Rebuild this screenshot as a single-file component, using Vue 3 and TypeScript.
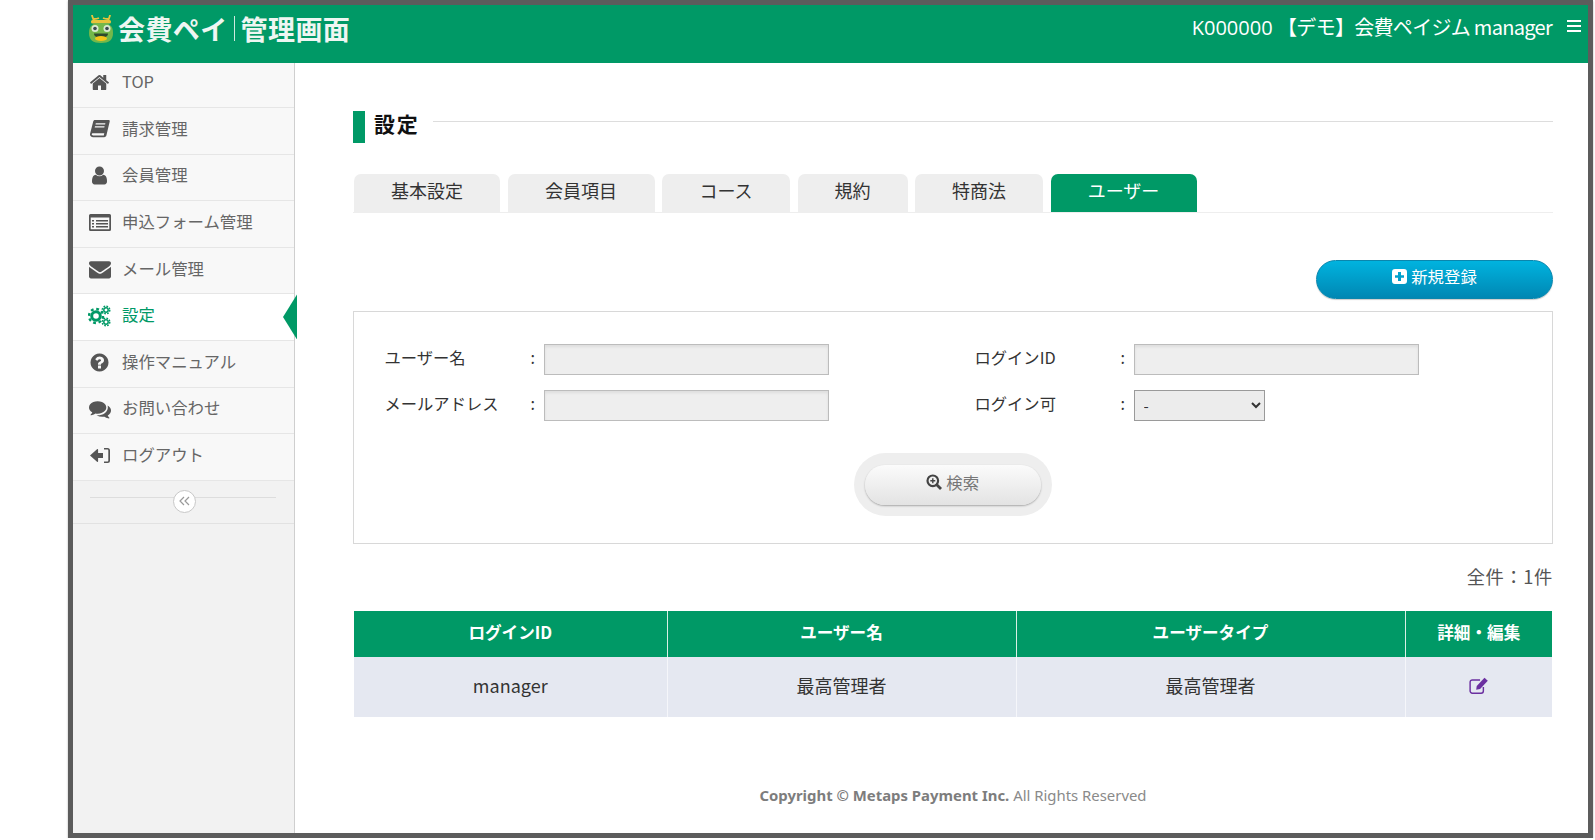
<script setup lang="ts">
const tabs = [
  { label: '基本設定', w: 146 },
  { label: '会員項目', w: 147 },
  { label: 'コース', w: 128 },
  { label: '規約', w: 110 },
  { label: '特商法', w: 128 },
  { label: 'ユーザー', w: 146, active: true },
]
const navBefore = ['TOP', '請求管理', '会員管理', '申込フォーム管理', 'メール管理']
const navAfter = ['操作マニュアル', 'お問い合わせ', 'ログアウト']
</script>

<template>
  <div class="frame">
    <header class="top">
      <div class="brand">
        <svg class="frog" width="27" height="31" viewBox="0 0 27 31">
          <path d="M6 9 C6 6 4 4 4 2 M20 9 C20 6 22 4 22 2 M6 6 C8 6 9 6 11 5 M20 6 C18 6 17 6 15 5" fill="none" stroke="#e8c33a" stroke-width="1.800" />
          <rect x="3" y="7" width="20" height="3.500" rx="1.500" fill="#e8c33a" />
          <path d="M1 20 C1 13 4 10 13 10 C22 10 25 13 25 20 C25 27 21 30 13 30 C5 30 1 27 1 20z" fill="#74b84a" />
          <rect x="3.500" y="12" width="7" height="7" rx="3.500" fill="#dcebd3" />
          <rect x="15.500" y="12" width="7" height="7" rx="3.500" fill="#dcebd3" />
          <circle cx="7" cy="15.500" r="1.800" fill="#3c4a52" />
          <circle cx="19" cy="15.500" r="1.800" fill="#3c4a52" />
          <path d="M6 20.500 H20 C20 23 18 24.500 13 24.500 C8 24.500 6 23 6 20.500z" fill="#2f4a2c" />
          <ellipse cx="13" cy="25.500" rx="6" ry="2.600" fill="#f5c518" />
        </svg>
        <span class="brand-a">会費ペイ</span>
        <span class="brand-sep"></span>
        <span class="brand-b">管理画面</span>
      </div>
      <div class="account"><span class="code">K000000</span> <span class="acc-rest">【デモ】会費ペイジム manager</span></div>
      <div class="burger"><i></i><i></i><i></i></div>
    </header>
    <div class="body">
      <aside class="side">
        <nav>
          <a v-for="(n, i) in navBefore" :key="n" class="item">
            <span class="ico">
              <svg v-if="i === 0" width="21" height="21" viewBox="0 0 1792 1792"><path d="M1472 992v480q0 26-19 45t-45 19h-384v-384h-256v384h-384q-26 0-45-19t-19-45v-480q0-1 .5-3t.5-3l575-474 575 474q1 2 1 6zm223-69l-62 74q-8 9-21 11h-3q-13 0-21-7l-692-577-692 577q-12 8-24 7-13-2-21-11l-62-74q-8-10-7-23.5t11-21.5l719-599q32-26 76-26t76 26l244 204v-195q0-14 9-23t23-9h192q14 0 23 9t9 23v408l219 182q10 8 11 21.5t-7 23.5z" /></svg>
              <svg v-else-if="i === 1" width="20" height="18" viewBox="0 0 20 18"><path fill-rule="evenodd" d="M5 0h13.500c1 0 1.500.6 1.200 1.500L16.500 15c-.3 1.300-1 2.200-2.400 2.200H3.200C1.200 17.200 0 16 0 14.600c0-.5.1-.9.2-1.300L3.200 1.600C3.400.6 4 0 5 0zm.8 3.200-.3 1.200h9.600l.3-1.200H5.800zm-.8 3-.3 1.200h9.600l.3-1.200H5zM3.100 13.200c-.9 0-1.400.4-1.400 1.100s.6 1.100 1.500 1.100h10.600c.1-.7.3-1.500.5-2.200H3.100z" /></svg>
              <svg v-else-if="i === 2" width="21" height="21" viewBox="0 0 1792 1792"><path d="M1536 1399q0 109-62.5 187t-150.5 78h-854q-88 0-150.5-78t-62.5-187q0-85 8.5-160.5t31.5-152 58.5-131 94-89 134.5-34.5q131 128 313 128t313-128q76 0 134.5 34.5t94 89 58.5 131 31.500 152 8.500 160.500zm-256-887q0 159-112.500 271.500t-271.500 112.500-271.500-112.500-112.500-271.500 112.500-271.500 271.500-112.500 271.500 112.500 112.500 271.500z" /></svg>
              <svg v-else-if="i === 3" width="22" height="17" viewBox="0 0 22 17"><path fill-rule="evenodd" d="M1.500 0h19A1.500 1.500 0 0 1 22 1.500v14a1.500 1.500 0 0 1-1.500 1.500h-19A1.500 1.500 0 0 1 0 15.500v-14A1.500 1.500 0 0 1 1.500 0zM1.700 3.500v11.800h18.600V3.500H1.700zM3 6h2v1.500H3zm4 0h12v1.500H7zM3 9h2v1.500H3zm4 0h12v1.500H7zm-4 3h2v1.500H3zm4 0h12v1.500H7z" /></svg>
              <svg v-else width="22" height="22" viewBox="0 0 1792 1792"><path d="M1792 710v794q0 66-47 113t-113 47h-1472q-66 0-113-47t-47-113v-794q44 49 101 87 362 246 497 345 57 42 92.500 65.500t94.500 48 110 24.500h2q51 0 110-24.500t94.500-48 92.500-65.500q170-123 498-345 57-39 100-87zm0-294q0 79-49 151t-122 123q-376 261-468 325-10 7-42.500 30.500t-54 38-52 32.500-57.500 27-50 9h-2q-23 0-50-9t-57.500-27-52-32.500-54-38-42.500-30.500q-91-64-262-182.500t-205-142.500q-62-42-117-115.500t-55-136.500q0-78 41.500-130t118.500-52h1472q65 0 112.500 47t47.500 113z" /></svg>
            </span>
            <span>{{ n }}</span>
          </a>
          <a class="item current">
            <span class="ico">
              <svg width="23" height="22" viewBox="0 0 23 22">
                <circle cx="8" cy="11" r="4.300" fill="none" stroke="#009966" stroke-width="3" />
                <circle cx="8" cy="11" r="7" fill="none" stroke="#009966" stroke-width="2.400" stroke-dasharray="2.800 2.700" />
                <circle cx="18" cy="5" r="2.200" fill="none" stroke="#009966" stroke-width="1.500" />
                <circle cx="18" cy="5" r="3.800" fill="none" stroke="#009966" stroke-width="1.400" stroke-dasharray="1.700 1.280" />
                <circle cx="18" cy="17" r="2.200" fill="none" stroke="#009966" stroke-width="1.500" />
                <circle cx="18" cy="17" r="3.800" fill="none" stroke="#009966" stroke-width="1.400" stroke-dasharray="1.700 1.280" />
              </svg>
            </span>
            <span>設定</span>
            <span class="pointer"></span>
          </a>
          <a v-for="(n, i) in navAfter" :key="n" class="item">
            <span class="ico">
              <svg v-if="i === 0" width="21" height="21" viewBox="0 0 1792 1792"><path d="M1024 1376v-192q0-14-9-23t-23-9h-192q-14 0-23 9t-9 23v192q0 14 9 23t23 9h192q14 0 23-9t9-23zm256-672q0-88-55.500-163t-138.500-116-170-41q-243 0-371 213-15 24 8 42l132 100q7 6 19 6 16 0 25-12 53-68 86-92 34-24 86-24 48 0 85.500 26t37.500 59q0 38-20 61t-68 45q-63 28-115.500 86.500t-52.500 125.500v36q0 14 9 23t23 9h192q14 0 23-9t9-23q0-19 21.500-49.500t54.500-49.500q32-18 49-28.500t46-35 44.500-48 28-60.500 12.500-81zm384 192q0 209-103 385.500t-279.500 279.500-385.500 103-385.500-103-279.500-279.500-103-385.500 103-385.500 279.500-279.500 385.500-103 385.500 103 279.500 279.500 103 385.500z" /></svg>
              <svg v-else-if="i === 1" width="22" height="22" viewBox="0 0 1792 1792"><path d="M1408 768q0 139-94 257t-256.500 186.500-353.500 68.500q-86 0-176-16-124 88-278 128-36 9-86 16h-3q-11 0-20.500-8t-11.500-21q-1-3-1-6.500t.5-6.500 2-6l2.500-5 3.500-5.500 4-5 4.500-5 4-4.500q5-6 23-25t26-29.500 22.500-29 25-38.500 20.500-44q-124-72-195-177t-71-224q0-139 94-257t256.500-186.500 353.500-68.500 353.500 68.500 256.500 186.500 94 257zm384 256q0 120-71 224.500t-195 176.500q10 24 20.500 44t25 38.500 22.500 29 26 29.500 23 25q1 1 4 4.500t4.500 5 4 5 3.500 5.500l2.500 5 2 6 .5 6.500-1 6.500q-3 14-13 22t-22 7q-50-7-86-16-154-40-278-128-90 16-176 16-271 0-472-132 58 4 88 4 161 0 309-45t264-129q125-92 192-212t67-254q0-77-23-152 129 71 204 178t75 230z" /></svg>
              <svg v-else width="20" height="17" viewBox="0 0 20 17"><path d="M0 8.500 7 2.200c.5-.4 1.100-.1 1.100.5V6H13v5H8.100v3.300c0 .6-.6.900-1.100.5L0 8.500zM14 1h3.500A2.500 2.500 0 0 1 20 3.500v10a2.500 2.500 0 0 1-2.500 2.500H14v-1.600h3.300c.6 0 1-.4 1-1V3.600c0-.6-.4-1-1-1H14V1z" /></svg>
            </span>
            <span>{{ n }}</span>
          </a>
        </nav>
        <div class="collapse">
          <span class="collapse-line"></span>
          <span class="collapse-btn">
            <svg width="11" height="10" viewBox="0 0 11 10"><path d="M5 1 1 5l4 4M10 1 6 5l4 4" fill="none" stroke="#9a9a9a" stroke-width="1.200" /></svg>
          </span>
        </div>
      </aside>
      <main class="main">
        <div class="heading">
          <span class="heading-bar"></span>
          <h1>設定</h1>
          <span class="heading-line"></span>
        </div>
        <div class="tabs">
          <div v-for="t in tabs" :key="t.label" class="tab" :class="{ on: t.active }" :style="{ width: t.w + 'px' }">{{ t.label }}</div>
        </div>
        <div class="actions">
          <button class="new">
            <svg width="15" height="15" viewBox="0 0 15 15"><path fill="#fff" fill-rule="evenodd" d="M3 0h9a3 3 0 0 1 3 3v9a3 3 0 0 1-3 3H3a3 3 0 0 1-3-3V3a3 3 0 0 1 3-3zm3 3v3.200H3v2.600h3V12h3V8.800h3V6.200H9V3H6z" /></svg>
            新規登録
          </button>
        </div>
        <section class="panel">
          <div class="grid">
            <label>ユーザー名</label><span class="colon">:</span><input class="input" type="text" />
            <label class="second">ログインID</label><span class="colon">:</span><input class="input" type="text" />
            <label>メールアドレス</label><span class="colon">:</span><input class="input" type="text" />
            <label class="second">ログイン可</label><span class="colon">:</span>
            <select class="select"><option>-</option></select>
          </div>
          <div class="search-wrap">
            <div class="search-halo">
              <button class="search">
                <svg width="16" height="16" viewBox="0 0 16 16"><circle cx="6.800" cy="6.800" r="5.300" fill="none" stroke="#444" stroke-width="2.200" /><path d="M10.500 10.500 15 15" stroke="#444" stroke-width="2.800" /><path d="M4.300 6.800h5M6.800 4.300v5" stroke="#444" stroke-width="1.400" /></svg>
                検索
              </button>
            </div>
          </div>
        </section>
        <div class="count">全件：1件</div>
        <table>
          <colgroup>
            <col style="width: 313px" /><col style="width: 349px" /><col style="width: 389px" /><col />
          </colgroup>
          <thead>
            <tr><th>ログインID</th><th>ユーザー名</th><th>ユーザータイプ</th><th>詳細・編集</th></tr>
          </thead>
          <tbody>
            <tr>
              <td>manager</td><td>最高管理者</td><td>最高管理者</td>
              <td>
                <svg class="edit" width="21" height="18" viewBox="0 0 19 16"><path d="M13 9v3.500a2 2 0 0 1-2 2H3a2 2 0 0 1-2-2V4.500a2 2 0 0 1 2-2h7" fill="none" stroke="#6b2fa0" stroke-width="1.300" /><path d="M6.500 11.500 7 8l7-7.500 3 2.800-7 7.500z" fill="#6b2fa0" /></svg>
              </td>
            </tr>
          </tbody>
        </table>
        <footer><b>Copyright © Metaps Payment Inc.</b> All Rights Reserved</footer>
      </main>
    </div>
  </div>
</template>

<style scoped>
.frame {
  box-sizing: border-box;
  margin-left: 68px;
  width: 1525px;
  height: 838px;
  border: 5px solid #5c5c5c;
  background: #fff;
  display: flex;
  flex-direction: column;
  font-family: "Noto Sans CJK JP", "Noto Sans", sans-serif;
  overflow: hidden;
  box-shadow: 0 1px 2px rgba(0, 0, 0, 0.3);
}
.top {
  height: 58px;
  flex: none;
  background: #009966;
  color: #fff;
  display: flex;
  align-items: center;
  padding: 0 7px 10px 15px;
  box-sizing: border-box;
}
.brand { display: flex; align-items: center; flex: 1; margin-bottom: 2px; }
.frog { margin-right: 3px; }
.brand-a, .brand-b { font-size: 27px; font-weight: 700; color: #eef6f2; line-height: 1; letter-spacing: 0.4px; }
.brand-sep { width: 1px; height: 25px; background: #cfe9de; margin: 0 6px; }
.account { font-size: 20px; line-height: 1; margin-bottom: 4px; }
.code { font-family: "Open Sans", sans-serif; }
.acc-rest { letter-spacing: -0.7px; }
.burger { margin-left: 15px; display: flex; flex-direction: column; gap: 3px; margin-bottom: 6px; }
.burger i { display: block; width: 14px; height: 2px; background: #fff; }
.body { flex: 1; display: flex; min-height: 0; }
.side {
  width: 222px;
  flex: none;
  box-sizing: border-box;
  background: #f2f2f2;
  border-right: 1px solid #cfcfcf;
}
.item {
  height: 46.600px;
  box-sizing: border-box;
  display: flex;
  align-items: center;
  padding: 0 0 6px 14px;
  background: #f8f8f8;
  color: #666;
  font-size: 16.400px;
  border-bottom: 1.500px solid #e6e6e6;
  position: relative;
}
.item:first-child { height: 45px; padding-bottom: 8px; }
.ico { width: 35px; flex: none; display: flex; justify-content: center; transform: translateX(-5px); fill: #555; margin-top: 3px; }
.current { background: #fff; color: #009966; }
.pointer {
  position: absolute;
  right: -3px;
  top: 0;
  width: 14px;
  height: 45px;
  background: #009966;
  clip-path: polygon(100% 0, 100% 100%, 0 50%);
}
.collapse {
  position: relative;
  height: 43px;
  border-bottom: 1.500px solid #e2e2e2;
  box-sizing: border-box;
}
.collapse-line { position: absolute; left: 17px; right: 18px; top: 16px; height: 1px; background: #ddd; }
.collapse-btn {
  position: absolute;
  left: 100px;
  top: 9px;
  width: 23px;
  height: 23px;
  box-sizing: border-box;
  border: 1px solid #c8c8c8;
  border-radius: 50%;
  background: #fff;
  display: flex;
  align-items: center;
  justify-content: center;
}
.main { flex: 1; padding: 48px 35px 0 58px; min-width: 0; box-sizing: border-box; }
.heading { display: flex; align-items: flex-start; height: 32px; }
.heading-bar { width: 12px; height: 32px; background: #009966; flex: none; }
h1 { margin: 0 14px 0 9px; font-size: 21px; font-weight: 700; line-height: 25px; color: #111; letter-spacing: 1.700px; }
.heading-line { flex: 1; height: 1px; background: #ddd; margin-top: 10px; }
.tabs {
  display: flex;
  gap: 7.500px;
  margin-top: 31px;
  padding-left: 1px;
  border-bottom: 1px solid #eee;
  height: 38px;
}
.tab {
  height: 38px;
  background: #eeeeee;
  border-radius: 7px 7px 0 0;
  text-align: center;
  font-size: 18px;
  line-height: 32px;
  color: #333;
  flex: none;
}
.tab.on { background: #009966; color: #fff; }
.actions { display: flex; justify-content: flex-end; margin-top: 47px; }
.new {
  width: 237px;
  height: 39px;
  border: 1px solid #0a86ad;
  border-radius: 20px;
  background: linear-gradient(#00b3df, #0087b3);
  color: #fff;
  font: inherit;
  font-size: 16.400px;
  padding: 0 0 7px;
  display: flex;
  align-items: center;
  justify-content: center;
  gap: 4px;
  box-shadow: 0 1px 1px rgba(0, 0, 0, 0.2);
}
.panel {
  box-sizing: border-box;
  margin-top: 12px;
  height: 233px;
  border: 1.500px solid #d8d8d8;
  padding: 32px 0 0 29.500px;
}
.grid {
  display: grid;
  grid-template-columns: 147px 13px 285px 145px 147px 13px 285px;
  grid-auto-rows: 31px;
  row-gap: 15px;
  align-items: center;
  font-size: 16.300px;
  color: #333;
}
.grid .second { grid-column-start: 5; }
.grid label { line-height: 1; margin: -4px 0 0 1px; }
.colon { line-height: 1; margin-top: -4px; text-align: left; }
.input {
  height: 31px;
  box-sizing: border-box;
  background: #eeeeee;
  border: 1px solid #bcbcbc;
  box-shadow: inset 0 2px 3px rgba(0, 0, 0, 0.07);
  border-bottom-width: 1.500px;
  padding: 0;
  margin: 0;
}
.select {
  width: 131px;
  height: 31px;
  box-sizing: border-box;
  background: #ececec;
  border: 1px solid #9a9a9a;
  padding: 0 5px;
  font: inherit;
  font-size: 15px;
  color: #333;
  border-radius: 0;
}
.search-wrap { display: flex; justify-content: center; margin-top: 32px; padding-right: 30px; }
.search-halo {
  width: 198px;
  height: 63px;
  border-radius: 32px;
  background: #eeeeee;
  display: flex;
  align-items: center;
  justify-content: center;
}
.search {
  width: 176px;
  height: 40px;
  border: none;
  border-radius: 20px;
  background: linear-gradient(#fbfbfb, #e3e3e3);
  box-shadow: 0 1px 2px rgba(0, 0, 0, 0.3);
  color: #777;
  font: inherit;
  font-size: 16.400px;
  padding: 0 0 6px;
  display: flex;
  align-items: center;
  justify-content: center;
  gap: 4px;
}
.count { text-align: right; font-size: 18.300px; color: #555; margin-top: 18px; line-height: 28px; letter-spacing: 0.6px; }
table {
  margin: 21px 0 0 1px;
  width: 1198px;
  border-collapse: collapse;
  table-layout: fixed;
}
th {
  height: 46px;
  background: #009966;
  color: #fff;
  font-size: 16.600px;
  font-weight: 700;
  padding: 0 0 4px;
  box-sizing: border-box;
  border-right: 1px solid #d9efe6;
}
th:last-child, td:last-child { border-right: none; }
td {
  height: 60px;
  padding: 0 0 4px;
  box-sizing: border-box;
  background: #e5e8f1;
  text-align: center;
  font-size: 18px;
  color: #333;
  border-right: 1px solid #f5f6fa;
}
.edit { display: inline-block; vertical-align: middle; margin: -5px 0 0 2px; }
footer { text-align: center; color: #8a8a8a; font-size: 14.900px; margin-top: 66px; line-height: 24px; font-family: "Noto Sans", sans-serif; }
footer b { font-weight: 700; color: #7d7d7d; }
</style>

<style>
html, body { background: #fff; margin: 0; }
</style>
